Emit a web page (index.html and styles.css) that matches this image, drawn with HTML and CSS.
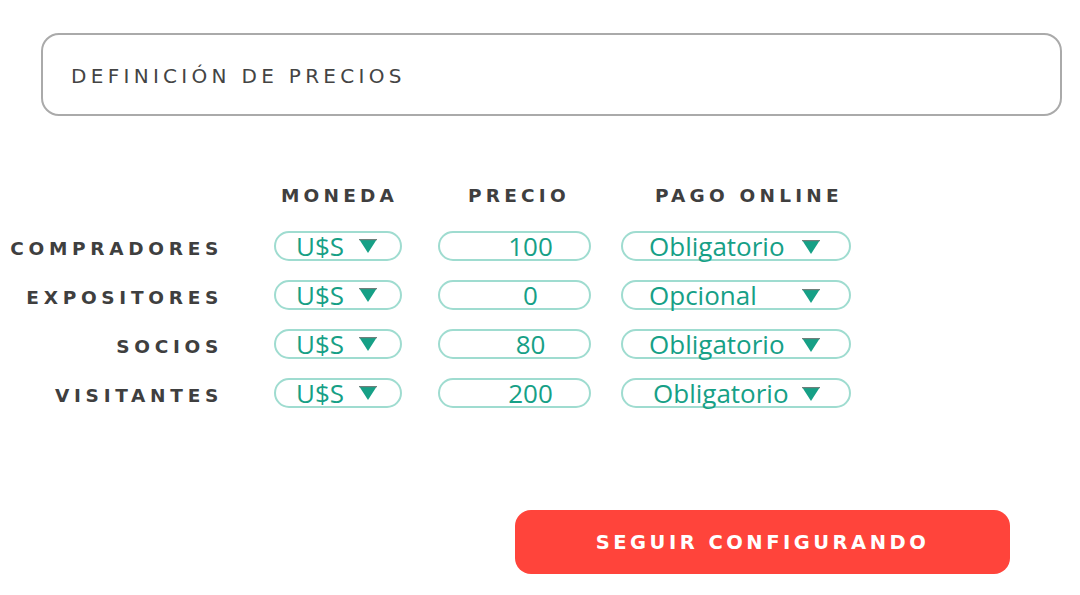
FILE: index.html
```html
<!DOCTYPE html>
<html lang="es">

<head>
  <meta charset="UTF-8">
  <meta name="viewport" content="width=device-width, initial-scale=1.0">
  <title>Definición de precios</title>
  <link rel="stylesheet" href="styles.css">
</head>

<body>
  <div class="title-box">
    <h1>DEFINICIÓN DE PRECIOS</h1>
  </div>

  <div class="prices">
    <div class="cell"></div>
    <div class="cell col-title title-moneda">MONEDA</div>
    <div class="cell col-title title-precio">PRECIO</div>
    <div class="cell col-title title-pago">PAGO ONLINE</div>

    <div class="cell row-label">COMPRADORES</div>
    <div class="cell"><div class="pill pill-moneda"><span>U$S</span><svg class="arrow" width="18" height="14" viewBox="0 0 18 14"><polygon points="0,0 18,0 9,14" fill="#16a086"/><line x1="0" y1="0.6" x2="18" y2="0.6" stroke="#6f7f7b" stroke-width="1.2"/></svg></div></div>
    <div class="cell"><div class="pill pill-precio">100</div></div>
    <div class="cell"><div class="pill pill-pago"><span>Obligatorio</span><svg class="arrow" width="18" height="14" viewBox="0 0 18 14"><polygon points="0,0 18,0 9,14" fill="#16a086"/><line x1="0" y1="0.6" x2="18" y2="0.6" stroke="#6f7f7b" stroke-width="1.2"/></svg></div></div>

    <div class="cell row-label">EXPOSITORES</div>
    <div class="cell"><div class="pill pill-moneda"><span>U$S</span><svg class="arrow" width="18" height="14" viewBox="0 0 18 14"><polygon points="0,0 18,0 9,14" fill="#16a086"/><line x1="0" y1="0.6" x2="18" y2="0.6" stroke="#6f7f7b" stroke-width="1.2"/></svg></div></div>
    <div class="cell"><div class="pill pill-precio">0</div></div>
    <div class="cell"><div class="pill pill-pago"><span>Opcional</span><svg class="arrow" width="18" height="14" viewBox="0 0 18 14"><polygon points="0,0 18,0 9,14" fill="#16a086"/><line x1="0" y1="0.6" x2="18" y2="0.6" stroke="#6f7f7b" stroke-width="1.2"/></svg></div></div>

    <div class="cell row-label">SOCIOS</div>
    <div class="cell"><div class="pill pill-moneda"><span>U$S</span><svg class="arrow" width="18" height="14" viewBox="0 0 18 14"><polygon points="0,0 18,0 9,14" fill="#16a086"/><line x1="0" y1="0.6" x2="18" y2="0.6" stroke="#6f7f7b" stroke-width="1.2"/></svg></div></div>
    <div class="cell"><div class="pill pill-precio">80</div></div>
    <div class="cell"><div class="pill pill-pago"><span>Obligatorio</span><svg class="arrow" width="18" height="14" viewBox="0 0 18 14"><polygon points="0,0 18,0 9,14" fill="#16a086"/><line x1="0" y1="0.6" x2="18" y2="0.6" stroke="#6f7f7b" stroke-width="1.2"/></svg></div></div>

    <div class="cell row-label">VISITANTES</div>
    <div class="cell"><div class="pill pill-moneda"><span>U$S</span><svg class="arrow" width="18" height="14" viewBox="0 0 18 14"><polygon points="0,0 18,0 9,14" fill="#16a086"/><line x1="0" y1="0.6" x2="18" y2="0.6" stroke="#6f7f7b" stroke-width="1.2"/></svg></div></div>
    <div class="cell"><div class="pill pill-precio">200</div></div>
    <div class="cell"><div class="pill pill-pago pago-shift"><span>Obligatorio</span><svg class="arrow" width="18" height="14" viewBox="0 0 18 14"><polygon points="0,0 18,0 9,14" fill="#16a086"/><line x1="0" y1="0.6" x2="18" y2="0.6" stroke="#6f7f7b" stroke-width="1.2"/></svg></div></div>
  </div>

  <button class="button-next">SEGUIR CONFIGURANDO</button>
</body>

</html>
```

FILE: styles.css
```css
body {
  margin: 0;
  background: #ffffff;
  font-family: "DejaVu Sans", sans-serif;
}

.title-box {
  margin-top: 33px;
  margin-left: 41px;
  width: 1021px;
  height: 83px;
  box-sizing: border-box;
  border: 2px solid #aaaaaa;
  border-radius: 18px;
  display: flex;
  align-items: center;
  padding-left: 28px;
}

.title-box h1 {
  margin: 0;
  padding-top: 2px;
  font-size: 20px;
  font-weight: normal;
  letter-spacing: 4.3px;
  color: #444444;
}

.prices {
  display: grid;
  grid-template-columns: 274px 164px 183px 230px;
  grid-auto-rows: 30px;
  row-gap: 19px;
  margin-top: 66px;
}

.cell {
  display: flex;
  align-items: center;
}

.col-title {
  font-size: 18.5px;
  font-weight: bold;
  letter-spacing: 4.2px;
  color: #3f3f3f;
  align-self: start;
  margin-top: 3px;
}

.title-moneda {
  padding-left: 7px;
}

.title-precio {
  padding-left: 30px;
}

.title-pago {
  padding-left: 34px;
}

.row-label {
  justify-content: flex-end;
  padding-right: 51px;
  padding-top: 4px;
  font-size: 18.5px;
  font-weight: bold;
  letter-spacing: 4.7px;
  color: #3f3f3f;
}

.pill {
  height: 30px;
  box-sizing: border-box;
  border: 2px solid #9fdcd0;
  border-radius: 15px;
  display: flex;
  align-items: center;
  font-family: "Open Sans", sans-serif;
  font-size: 26px;
  color: #16a086;
  line-height: 1;
}

.pill-moneda {
  width: 128px;
  padding-left: 20px;
}

.pill-moneda .arrow {
  margin-left: 15px;
}

.pill-precio {
  width: 153px;
  justify-content: center;
  padding-left: 32px;
}

.pill-pago {
  width: 230px;
  padding-left: 26px;
  position: relative;
}

.pago-shift {
  padding-left: 30px;
}

.pill-pago .arrow {
  position: absolute;
  left: 179px;
  top: 7px;
}

.button-next {
  display: block;
  margin-top: 102px;
  margin-left: 515px;
  width: 495px;
  height: 64px;
  border: none;
  border-radius: 16px;
  background-color: #ff443b;
  color: #ffffff;
  font-family: "DejaVu Sans", sans-serif;
  font-size: 19.5px;
  font-weight: bold;
  letter-spacing: 3.5px;
  cursor: pointer;
}
```
